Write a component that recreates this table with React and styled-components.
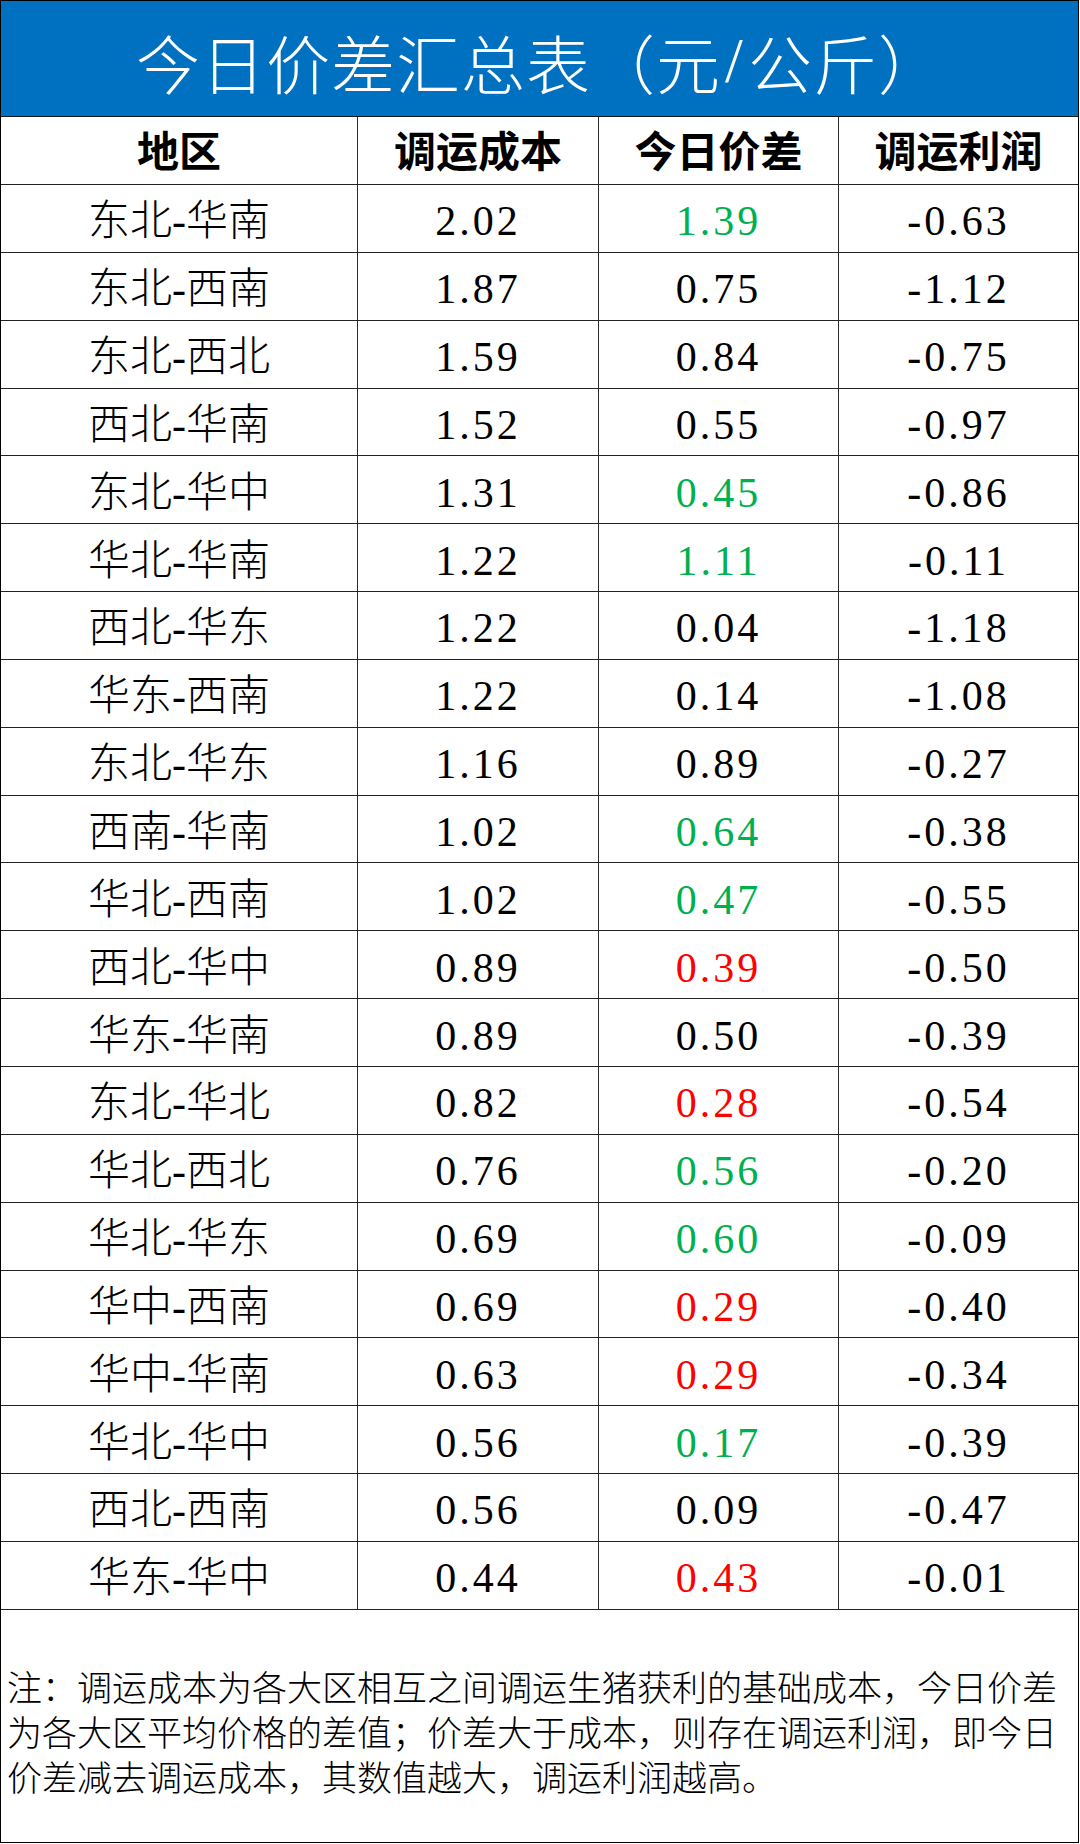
import React from "react";
import styled, { createGlobalStyle } from "styled-components";

const Global = createGlobalStyle`
  html, body { margin: 0; padding: 0; background: #ffffff; }
  body { font-family: "Liberation Serif", "Noto Sans CJK SC", serif; }
  * { box-sizing: border-box; }
`;

const FONT = `"Liberation Serif", "Noto Sans CJK SC", serif`;
const COLS = "357px 241px 240px 1fr";
const ROW_H = (1609 - 184) / 21;

const Sheet = styled.div`
  width: 1079px;
  border: 1px solid #000000;
  background: #ffffff;
  display: flex;
  flex-direction: column;
`;

const TitleBar = styled.div`
  height: 116px;
  background: #0070c0;
  border-bottom: 1px solid #1a1a1a;
  display: flex;
  align-items: center;
  justify-content: center;
  padding-top: 4px;
  color: #ffffff;
  font-family: ${FONT};
  font-size: 64px;
  font-weight: 300;
  letter-spacing: 1px;
`;

const Slash = styled.span`
  padding: 0 4px;
`;

const Row = styled.div`
  display: grid;
  grid-template-columns: ${COLS};
  height: ${(p) => (p.$head ? 68 : ROW_H)}px;
  border-bottom: 1px solid #222222;
`;

const Cell = styled.div`
  display: flex;
  align-items: center;
  justify-content: center;
  padding-top: ${(p) => (p.$head ? 4 : 6)}px;
  border-right: ${(p) => (p.$last ? "none" : "1px solid #2a2a2a")};
  font-family: ${FONT};
  font-size: 42px;
  line-height: 1;
  white-space: nowrap;
  font-weight: ${(p) => (p.$head ? 700 : 300)};
  letter-spacing: ${(p) => (p.$num ? "3px" : "0")};
  color: ${(p) =>
    p.$tone === "green" ? "#00b050" : p.$tone === "red" ? "#ff0000" : "#000000"};
`;

const Note = styled.div`
  height: 232px;
  display: flex;
  align-items: center;
  padding: 10px 4px 0 6px;
  font-family: "Noto Sans CJK SC", sans-serif;
  font-size: 35px;
  line-height: 45px;
  font-weight: 300;
  color: #000000;
`;

const headers = ["地区", "调运成本", "今日价差", "调运利润"];

const rows = [
  ["东北-华南", "2.02", "1.39", "g", "-0.63"],
  ["东北-西南", "1.87", "0.75", "", "-1.12"],
  ["东北-西北", "1.59", "0.84", "", "-0.75"],
  ["西北-华南", "1.52", "0.55", "", "-0.97"],
  ["东北-华中", "1.31", "0.45", "g", "-0.86"],
  ["华北-华南", "1.22", "1.11", "g", "-0.11"],
  ["西北-华东", "1.22", "0.04", "", "-1.18"],
  ["华东-西南", "1.22", "0.14", "", "-1.08"],
  ["东北-华东", "1.16", "0.89", "", "-0.27"],
  ["西南-华南", "1.02", "0.64", "g", "-0.38"],
  ["华北-西南", "1.02", "0.47", "g", "-0.55"],
  ["西北-华中", "0.89", "0.39", "r", "-0.50"],
  ["华东-华南", "0.89", "0.50", "", "-0.39"],
  ["东北-华北", "0.82", "0.28", "r", "-0.54"],
  ["华北-西北", "0.76", "0.56", "g", "-0.20"],
  ["华北-华东", "0.69", "0.60", "g", "-0.09"],
  ["华中-西南", "0.69", "0.29", "r", "-0.40"],
  ["华中-华南", "0.63", "0.29", "r", "-0.34"],
  ["华北-华中", "0.56", "0.17", "g", "-0.39"],
  ["西北-西南", "0.56", "0.09", "", "-0.47"],
  ["华东-华中", "0.44", "0.43", "r", "-0.01"],
];

const toneOf = (t) => (t === "g" ? "green" : t === "r" ? "red" : "black");

export default function App() {
  return (
    <>
      <Global />
      <Sheet>
        <TitleBar>
          今日价差汇总表（元<Slash>/</Slash>公斤）
        </TitleBar>
        <Row $head>
          {headers.map((h, i) => (
            <Cell key={h} $head $last={i === 3}>
              {h}
            </Cell>
          ))}
        </Row>
        {rows.map(([region, cost, diff, tone, profit]) => (
          <Row key={region}>
            <Cell>{region}</Cell>
            <Cell $num>{cost}</Cell>
            <Cell $num $tone={toneOf(tone)}>
              {diff}
            </Cell>
            <Cell $num $last>
              {profit}
            </Cell>
          </Row>
        ))}
        <Note>
          注：调运成本为各大区相互之间调运生猪获利的基础成本，今日价差为各大区平均价格的差值；价差大于成本，则存在调运利润，即今日价差减去调运成本，其数值越大，调运利润越高。
        </Note>
      </Sheet>
    </>
  );
}
